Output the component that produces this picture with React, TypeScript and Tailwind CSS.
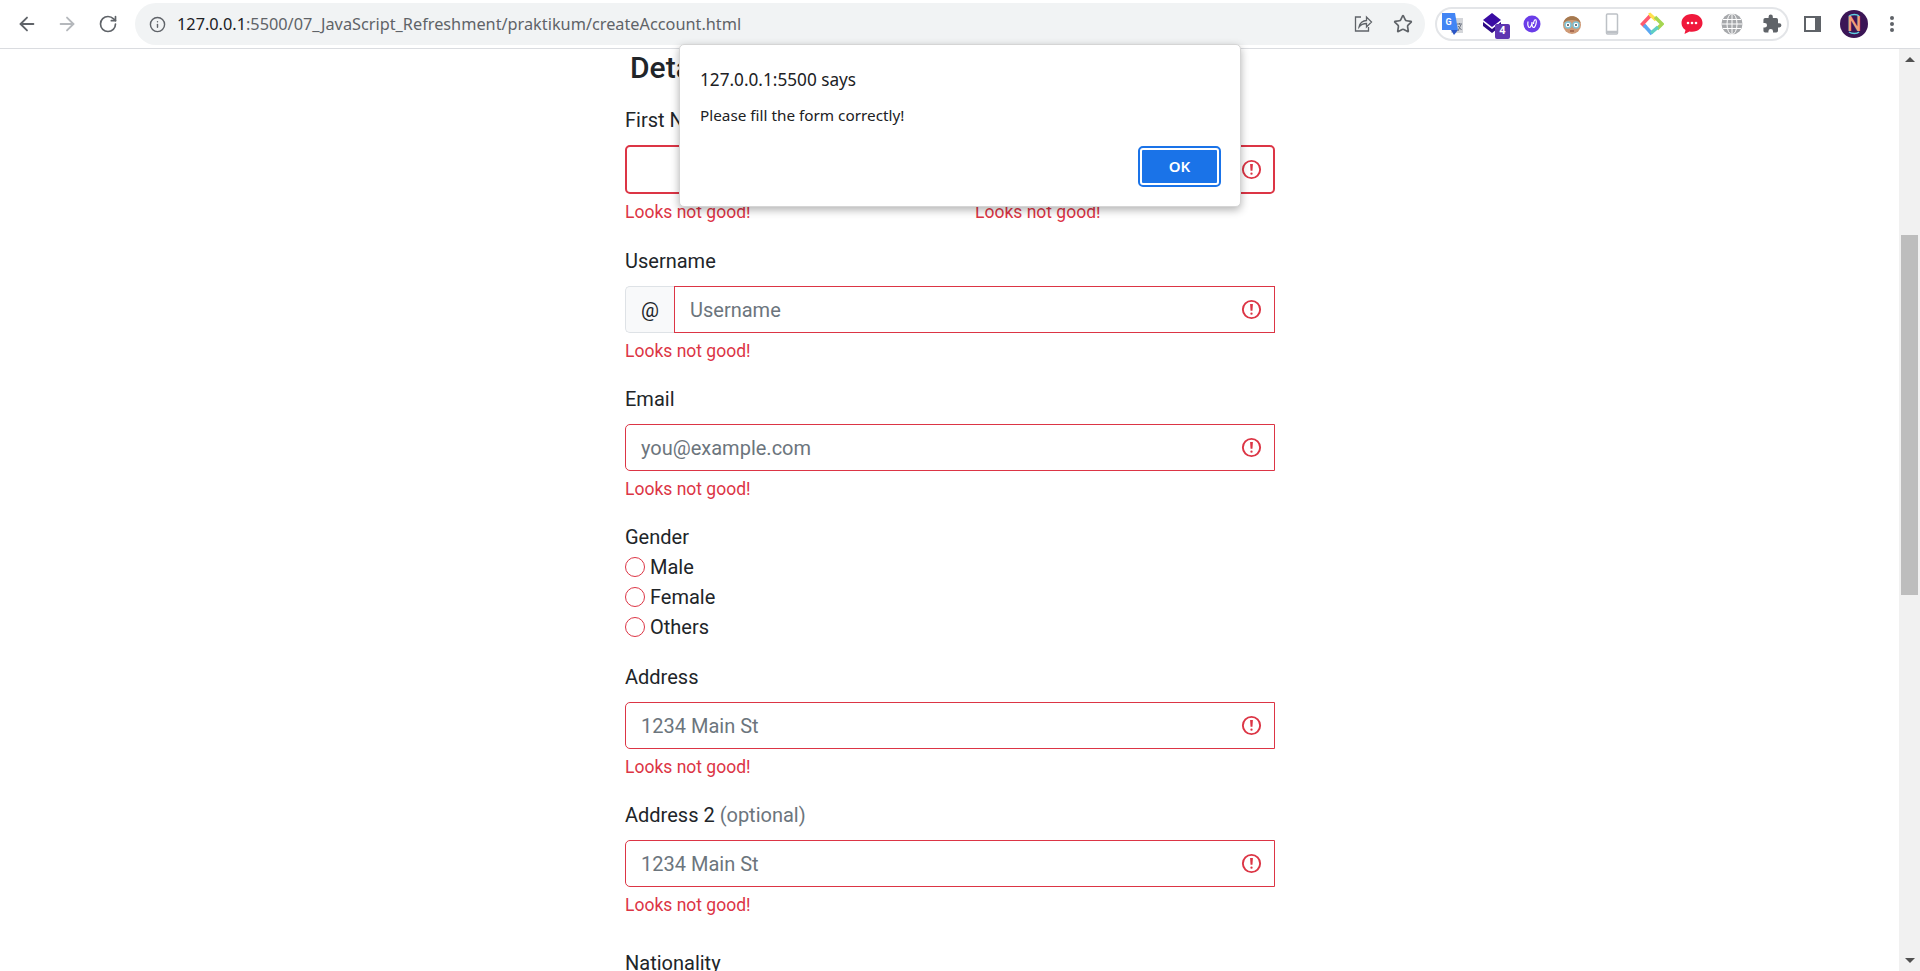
import { ArrowLeft, ArrowRight, RotateCw, Info, Star } from 'lucide-react';

const errorText = 'Looks not good!';

function ErrorIcon() {
  return (
    <svg viewBox="0 0 12 12" width="23" height="23" fill="none" className="shrink-0">
      <circle cx="6" cy="6" r="4.5" stroke="#dc3545" />
      <path d="M5.800 3.600h.4L6 6.600z" fill="#dc3545" stroke="#dc3545" />
      <circle cx="6" cy="8.200" r=".6" fill="#dc3545" />
    </svg>
  );
}

function Field({ label, optional, placeholder, prefix }: { label: string; optional?: string; placeholder: string; prefix?: boolean }) {
  return (
    <div className="mb-[20px]">
      <div className="mb-[10px] h-[30px] leading-[30px]">
        {label} {optional && <span className="text-[#6c757d]">{optional}</span>}
      </div>
      <div className="flex h-[47px]">
        {prefix && (
          <div className="flex w-[49px] items-center justify-center rounded-l-[5px] border border-r-0 border-[#dee2e6] bg-[#f8f9fa]">@</div>
        )}
        <div className={`flex flex-1 items-center justify-between border border-[#dc3545] pl-[15px] pr-[11px] text-[#6c757d] ${prefix ? '' : 'rounded-l-[5px]'}`}>
          <span>{placeholder}</span>
          <ErrorIcon />
        </div>
      </div>
      <div className="mt-[5px] h-[26px] text-[17.5px] leading-[26px] text-[#dc3545]">{errorText}</div>
    </div>
  );
}

function NameField({ label }: { label: string }) {
  return (
    <div className="mb-[21px]">
      <div className="mb-[10px] h-[30px] leading-[30px]">{label}</div>
      <div className="flex h-[49px] items-center justify-end rounded-[5px] border-2 border-[#dc3545] pr-[10px]">
        <ErrorIcon />
      </div>
      <div className="mt-[5px] h-[26px] text-[17.5px] leading-[26px] text-[#dc3545]">{errorText}</div>
    </div>
  );
}

function Radio({ label }: { label: string }) {
  return (
    <div className="flex h-[30px] items-center gap-[5px]">
      <span className="h-[20px] w-[20px] rounded-full border border-[#dc3545]" />
      <span className="leading-[30px]">{label}</span>
    </div>
  );
}

function Extensions() {
  return (
    <div className="ml-[10px] flex h-[34px] w-[354px] items-center gap-[16px] rounded-full border-2 border-[#e3e5e8] pl-[3px]">
      <svg viewBox="0 0 24 24" width="24" height="24" className="shrink-0">
        <rect x="11" y="6" width="12" height="15" fill="#d4d6da" />
        <path d="M2 1h13l3 17H2z" fill="#4285f4" />
        <path d="M11 18h7l-4 5z" fill="#2a56c6" />
        <text x="5.500" y="12.500" fontSize="9" fontWeight="700" fill="#fff" fontFamily="Roboto, sans-serif">G</text>
        <path d="M17 12h5M19.500 11v1.500M18 19l3-6.500M18 14l3.500 4" stroke="#6b7280" strokeWidth="1" fill="none" />
      </svg>
      <div className="relative h-[24px] w-[24px] shrink-0">
        <svg viewBox="0 0 24 24" width="24" height="24">
          <path d="M12 1l9 7-9 7-9-7z" fill="#3a0ca3" />
          <path d="M3 10l9 7 9-7v4l-9 7-9-7z" fill="#2d0a85" />
        </svg>
        <span className="absolute -right-[6px] -bottom-[3px] flex h-[15px] w-[15px] items-center justify-center rounded-[2px] bg-[#5e35b1] text-[11px] font-bold text-white">4</span>
      </div>
      <svg viewBox="0 0 24 24" width="24" height="24" className="shrink-0">
        <circle cx="12" cy="12" r="8.500" fill="#6a3de8" />
        <path d="M8 9.500c-.5 3 0 6 1.500 6S12 12 12 10c0 3 .5 5.500 1.500 5.500 2 0 3.500-6 2.500-7.500-1-1-2.500 1-2.500 4" fill="none" stroke="#fff" strokeWidth="1.200" />
      </svg>
      <svg viewBox="0 0 24 24" width="24" height="24" className="shrink-0">
        <circle cx="12" cy="13" r="9" fill="#cf9a76" />
        <path d="M3.500 11C5 2 19 2 20.500 11c-2-2-4-3-8.500-3s-6.500 1-8.500 3z" fill="#a5794f" />
        <circle cx="8" cy="13" r="3" fill="#fff" stroke="#7dc4d8" strokeWidth="1.500" />
        <circle cx="16" cy="13" r="3" fill="#fff" stroke="#7dc4d8" strokeWidth="1.500" />
        <circle cx="8" cy="13" r="1" fill="#444" />
        <circle cx="16" cy="13" r="1" fill="#444" />
        <path d="M10 19h4" stroke="#9a5a45" strokeWidth="1.500" />
      </svg>
      <svg viewBox="0 0 24 24" width="24" height="24" fill="none" className="shrink-0">
        <rect x="6.500" y="2" width="11" height="20" rx="1" stroke="#bdc1c6" strokeWidth="1.500" />
        <path d="M6.500 20h11" stroke="#bdc1c6" strokeWidth="2.500" />
      </svg>
      <svg viewBox="0 0 24 24" width="24" height="24" fill="none" className="shrink-0">
        <path d="M10 4l-7.500 8 3 3" stroke="#ff5a6e" strokeWidth="3.500" />
        <path d="M9 3l1-.5 6 5.500" stroke="#ffe14d" strokeWidth="3.500" />
        <path d="M15 5l7 7-5 5" stroke="#a5d651" strokeWidth="3.500" />
        <path d="M4 13l8 9" stroke="#5aa7f2" strokeWidth="3.500" />
        <path d="M11 21l7-6" stroke="#5fcfc4" strokeWidth="3.500" />
      </svg>
      <svg viewBox="0 0 24 24" width="24" height="24" className="shrink-0">
        <path d="M12 2C5.500 2 1.500 6 1.500 11c0 3 1.500 5.500 4 7l-1 4 5-2.500c.8.100 1.700.2 2.500.2 6.500 0 10.500-4 10.500-8.700S18.500 2 12 2z" fill="#f0193c" />
        <circle cx="8" cy="11" r="1.300" fill="#fff" />
        <circle cx="12" cy="11" r="1.300" fill="#fff" />
        <circle cx="16" cy="11" r="1.300" fill="#fff" />
      </svg>
      <svg viewBox="0 0 24 24" width="24" height="24" fill="none" stroke="#fff" strokeWidth="1" className="shrink-0">
        <circle cx="12" cy="12" r="10.500" fill="#a6a8ab" stroke="none" />
        <ellipse cx="12" cy="12" rx="5" ry="10.500" />
        <path d="M12 1.500v21M3 7.500h18M3 16.500h18M1.500 12h21" />
      </svg>
      <svg viewBox="-2 -2 28 28" width="24" height="24" fill="#5f6368" className="shrink-0">
        <path d="M20.500 11H19V7a2 2 0 0 0-2-2h-4V3.500a2.500 2.500 0 0 0-5 0V5H4a2 2 0 0 0-2 2v3.800h1.500a2.700 2.700 0 0 1 0 5.400H2V20a2 2 0 0 0 2 2h3.800v-1.500a2.700 2.700 0 0 1 5.400 0V22H17a2 2 0 0 0 2-2v-4h1.500a2.500 2.500 0 0 0 0-5z" />
      </svg>
    </div>
  );
}

function Avatar() {
  return (
    <div className="relative ml-[19px] flex h-[28px] w-[28px] shrink-0 items-center justify-center rounded-full bg-[#3b1556] text-[20px] font-medium leading-none text-[#f2a07a]">
      N
      <svg viewBox="0 0 28 28" width="28" height="28" fill="none" className="absolute left-0 top-0">
        <path d="M9 6c3-2 8-2 10 0M9 22c3 2 8 2 10 0" stroke="#5fd0e0" strokeWidth="1.500" />
      </svg>
    </div>
  );
}

export default function App() {
  return (
    <div className="relative flex h-[971px] w-[1920px] flex-col overflow-hidden bg-white font-['Roboto',sans-serif] text-[20px] text-[#212529]">
      {/* browser toolbar */}
      <header className="flex h-[49px] shrink-0 items-center border-b border-[#dadce0] bg-white pl-[16px]">
        <ArrowLeft size={22} color="#5f6368" strokeWidth={2} />
        <ArrowRight size={22} color="#b5b8bc" strokeWidth={2} className="ml-[18px]" />
        <RotateCw size={20} color="#5f6368" strokeWidth={2} className="ml-[20px]" />
        <div className="ml-[17px] flex h-[42px] w-[1290px] shrink-0 items-center rounded-full bg-[#f1f3f4] pl-[14px] pr-[12px]">
          <Info size={17} color="#5f6368" strokeWidth={2} />
          <div className="ml-[11px] flex-1 font-['Noto_Sans',sans-serif] text-[16.3px] text-[#5f6368]">
            <span className="text-[#202124]">127.0.0.1</span>:5500/07_JavaScript_Refreshment/praktikum/createAccount.html
          </div>
          <svg viewBox="0 0 20 20" width="20" height="20" fill="none" stroke="#5f6368" strokeWidth="1.300">
            <path d="M8 3H2.500v14h13v-4" />
            <path d="M6 13c.5-4 4-6.500 7.500-6.500V3l5 5-5 5V9.500C10.500 9.500 8 10.500 6 13z" />
          </svg>
          <Star size={20} color="#5f6368" strokeWidth={2} className="ml-[20px]" />
        </div>
        <Extensions />
        <svg viewBox="0 0 17 16" width="17" height="16" fill="none" className="ml-[15px] shrink-0">
          <rect x="1" y="1" width="15" height="14" stroke="#5f6368" strokeWidth="2" />
          <rect x="11" y="1" width="5" height="14" fill="#5f6368" />
        </svg>
        <Avatar />
        <svg viewBox="0 0 4 16" width="4" height="16" fill="#5f6368" className="ml-[22px] shrink-0">
          <circle cx="2" cy="2" r="2" />
          <circle cx="2" cy="8" r="2" />
          <circle cx="2" cy="14" r="2" />
        </svg>
      </header>

      {/* page */}
      <div className="flex min-h-0 flex-1">
        <main className="min-w-0 flex-1 overflow-hidden">
          <div className="ml-[625px] w-[650px]">
            <h4 className="ml-[5px] mt-[1px] h-[36px] text-[30px] font-medium leading-[36px]">Details</h4>
            <div className="mt-[19px] grid grid-cols-2 gap-x-[50px]">
              <NameField label="First Name" />
              <NameField label="Last Name" />
            </div>
            <Field label="Username" placeholder="Username" prefix />
            <Field label="Email" placeholder="you@example.com" />
            <div className="mb-[20px]">
              <div className="h-[30px] leading-[30px]">Gender</div>
              <Radio label="Male" />
              <Radio label="Female" />
              <Radio label="Others" />
            </div>
            <Field label="Address" placeholder="1234 Main St" />
            <Field label="Address 2" optional="(optional)" placeholder="1234 Main St" />
            <div className="mt-[30px] h-[30px] leading-[30px]">Nationality</div>
          </div>
        </main>

        {/* scrollbar */}
        <div className="flex w-[21px] shrink-0 flex-col bg-[#f1f1f1]">
          <div className="flex h-[21px] items-center justify-center">
            <span className="h-0 w-0 border-x-[5px] border-b-[5px] border-x-transparent border-b-[#505050]" />
          </div>
          <div className="mx-[2px] mt-[165px] h-[360px] bg-[#bdbdbd]" />
          <div className="mt-auto flex h-[21px] items-center justify-center">
            <span className="h-0 w-0 border-x-[5px] border-t-[5px] border-x-transparent border-t-[#505050]" />
          </div>
        </div>
      </div>

      {/* alert dialog */}
      <div className="absolute left-[679px] top-[44px] flex h-[163px] w-[562px] flex-col rounded-[5px] border border-[#d5d5d5] bg-white px-[20px] font-['Noto_Sans',sans-serif] text-[#202124] shadow-[0_3px_8px_rgba(0,0,0,0.3)]">
        <div className="mt-[23px] h-[24px] text-[17.2px] leading-[24px]">127.0.0.1:5500 says</div>
        <div className="mt-[13px] h-[20px] text-[15.3px] leading-[20px]">Please fill the form correctly!</div>
        <button className="ml-auto mr-[1px] mt-[23px] h-[37px] w-[79px] rounded-[3px] border-2 border-white bg-[#1a73e8] text-[15px] font-semibold text-white outline-2 outline-[#1a73e8]">OK</button>
      </div>
    </div>
  );
}
